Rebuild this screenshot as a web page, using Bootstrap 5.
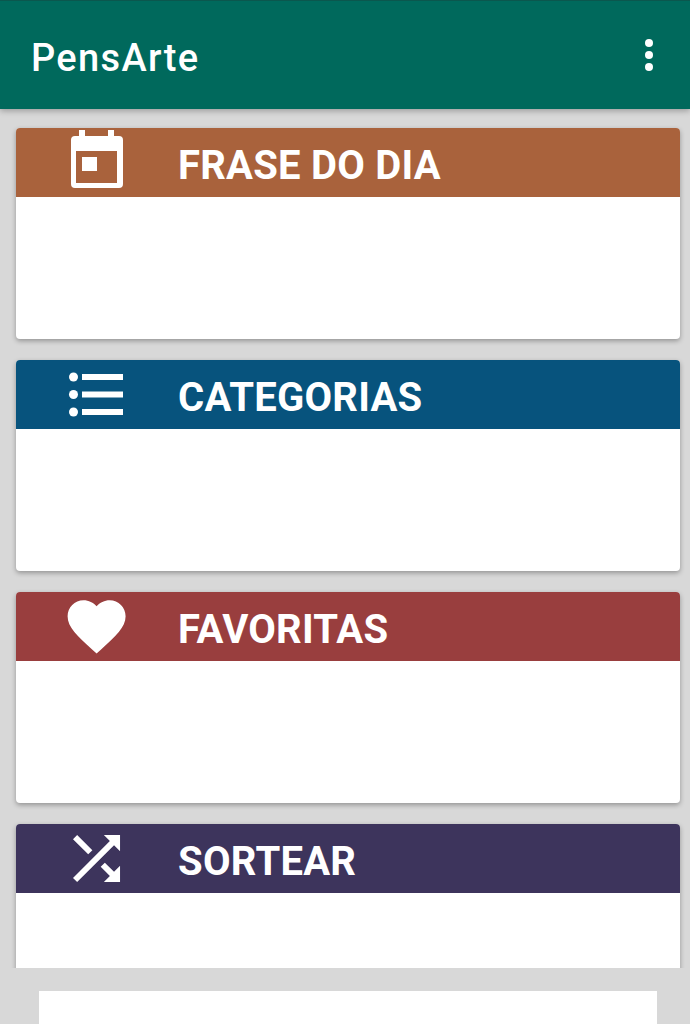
<!DOCTYPE html>
<html lang="pt">
<head>
<meta charset="utf-8">
<title>PensArte</title>
<link href="https://cdn.jsdelivr.net/npm/bootstrap@5.3.0/dist/css/bootstrap.min.css" rel="stylesheet">
<style>
html,body{height:1024px;overflow:hidden}
body{background:#d8d8d8;font-family:Roboto,"Liberation Sans",sans-serif}
.app-screen{height:1024px}
.app-bar{height:109px;background:#00695c;border-top:1px solid #0b574e;box-shadow:0 2px 6px rgba(0,0,0,.28);padding:0 32px 0 31px;z-index:2}
.app-title{font-size:38px;font-weight:500;letter-spacing:1.35px;color:#fff;line-height:1;margin-top:5px}
.app-menu{width:9px;gap:4px;margin-right:5px}
.app-dot{width:8px;height:8px;border-radius:50%;background:#fff}
.scroll-pane{height:859px;overflow:hidden;padding:19px 10px 0 16px;gap:21px}
.tile{height:211px;flex:none;background:#fff;border-radius:4px;overflow:hidden;box-shadow:0 2px 5px rgba(0,0,0,.32)}
.tile-head{height:69px;color:#fff}
.tile-icon{width:162px;flex:none;padding-left:45px}
.tile-icon svg{display:block}
.tile-name{font-size:40px;font-weight:700;line-height:1;letter-spacing:.25px;margin:6px 0 0}
.c-brown{background:#a9623c}
.c-blue{background:#07537d}
.c-red{background:#993e3e}
.c-purple{background:#3d345c}
.ad-strip{height:56px;padding:23px 33px 0 39px}
.ad-box{height:33px;background:#fff}
</style>
</head>
<body>
<div class="app-screen d-flex flex-column">
  <header class="app-bar d-flex align-items-center justify-content-between position-relative">
    <div class="app-title">PensArte</div>
    <div class="app-menu d-flex flex-column align-items-center"><span class="app-dot"></span><span class="app-dot"></span><span class="app-dot"></span></div>
  </header>
  <main class="scroll-pane d-flex flex-column">
    <section class="tile">
      <div class="tile-head c-brown d-flex align-items-center">
        <div class="tile-icon"><svg width="70" height="69" viewBox="0 0 70 69"><path fill="#fff" fill-rule="evenodd" d="M18 2h6v6h23V2h6v6h5a4 4 0 0 1 4 4v44a4 4 0 0 1-4 4H14a4 4 0 0 1-4-4V12a4 4 0 0 1 4-4h4zM15 23v32h41V23zM21 29h15v14H21z"/></svg></div>
        <h2 class="tile-name">FRASE DO DIA</h2>
      </div>
    </section>
    <section class="tile">
      <div class="tile-head c-blue d-flex align-items-center">
        <div class="tile-icon"><svg width="70" height="69" viewBox="0 0 70 69"><g fill="#fff"><circle cx="12.500" cy="17" r="4.500"/><circle cx="12.500" cy="34.500" r="4.500"/><circle cx="12.500" cy="52" r="4.500"/><rect x="21" y="14" width="41" height="6"/><rect x="21" y="31.500" width="41" height="6"/><rect x="21" y="49" width="41" height="6"/></g></svg></div>
        <h2 class="tile-name">CATEGORIAS</h2>
      </div>
    </section>
    <section class="tile">
      <div class="tile-head c-red d-flex align-items-center">
        <div class="tile-icon"><svg width="70" height="69" viewBox="0 0 70 69"><path fill="#fff" transform="translate(.8 -.4) scale(2.900)" d="M12 21.350l-1.450-1.320C5.400 15.360 2 12.280 2 8.500 2 5.420 4.420 3 7.500 3c1.740 0 3.410.810 4.500 2.090C13.090 3.810 14.760 3 16.500 3 19.580 3 22 5.420 22 8.500c0 3.780-3.400 6.860-8.550 11.540L12 21.350z"/></svg></div>
        <h2 class="tile-name">FAVORITAS</h2>
      </div>
    </section>
    <section class="tile">
      <div class="tile-head c-purple d-flex align-items-center">
        <div class="tile-icon"><svg width="70" height="69" viewBox="0 0 70 69"><path fill="#fff" transform="translate(.24 -.76) scale(2.940)" d="M10.590 9.170L5.410 4 4 5.410l5.170 5.170 1.420-1.410zM14.500 4l2.040 2.040L4 18.590 5.410 20 17.960 7.460 20 9.500V4h-5.500zm.33 9.410l-1.410 1.410 3.130 3.130L14.500 20H20v-5.500l-2.040 2.040-3.130-3.130z"/></svg></div>
        <h2 class="tile-name">SORTEAR</h2>
      </div>
    </section>
  </main>
  <footer class="ad-strip"><div class="ad-box"></div></footer>
</div>
<script src="https://cdn.jsdelivr.net/npm/bootstrap@5.3.0/dist/js/bootstrap.bundle.min.js"></script>
</body>
</html>
